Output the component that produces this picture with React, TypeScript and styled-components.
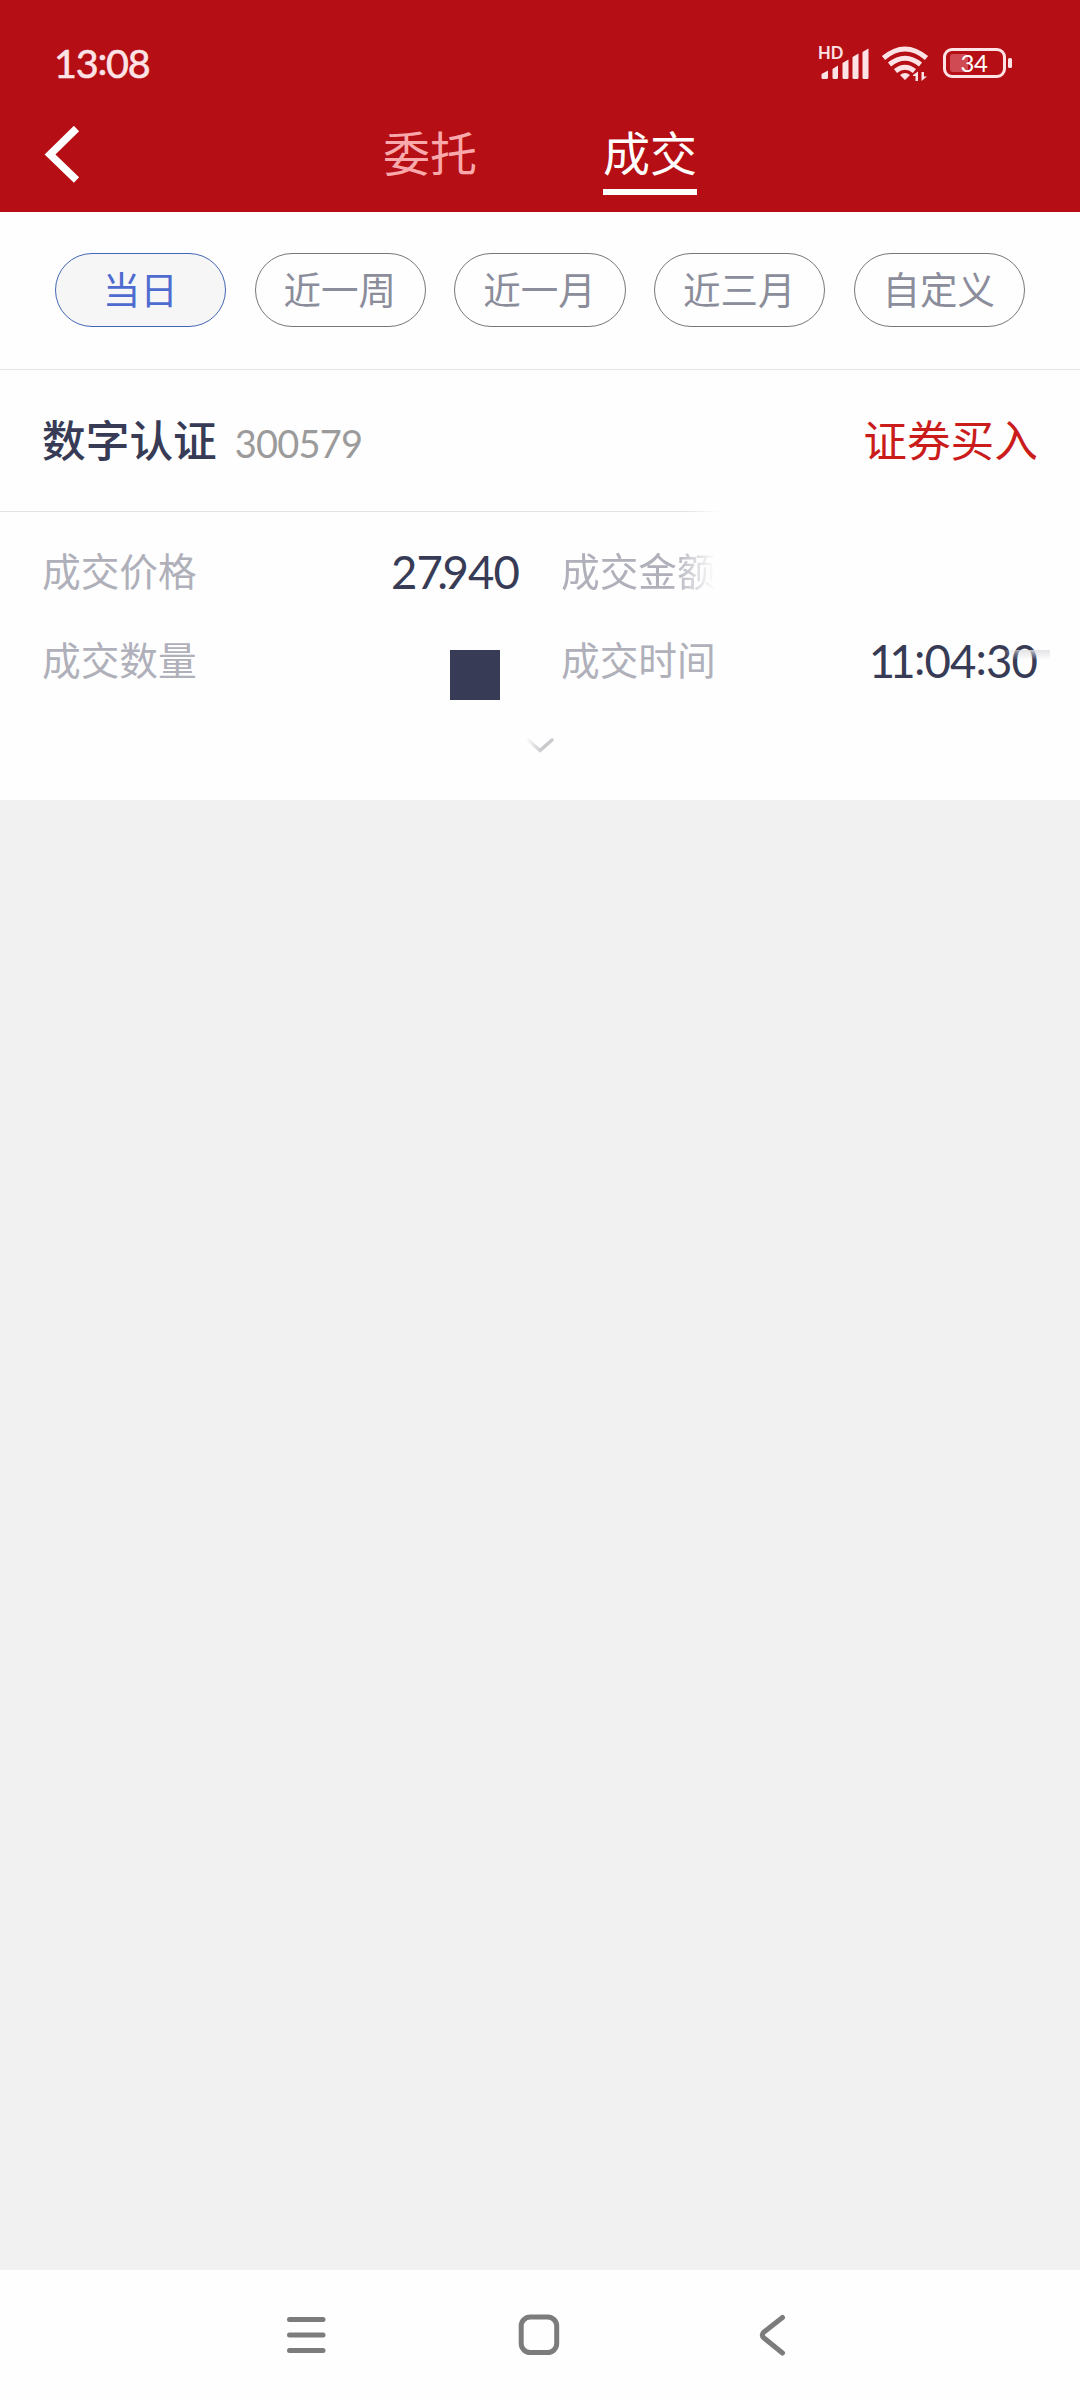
import React from "react";
import styled, { createGlobalStyle } from "styled-components";

const cjk = `"Noto Sans CJK SC", sans-serif`;
const num = `Lato, "Noto Sans CJK SC", sans-serif`;

const GlobalStyle = createGlobalStyle`
  * { box-sizing: border-box; }
  body { margin: 0; background: #f1f1f1; font-family: ${cjk}; }
`;

const Screen = styled.div`
  width: 1080px;
  height: 2400px;
  display: flex;
  flex-direction: column;
  background: #f1f1f1;
  overflow: hidden;
`;

const Header = styled.header`
  height: 212px;
  background: #b50f15;
  display: flex;
  flex-direction: column;
`;

const StatusBar = styled.div`
  height: 126px;
  padding: 0 68px 0 54px;
  display: flex;
  align-items: center;
  justify-content: space-between;
`;

const Clock = styled.span`
  font: 400 39.5px/48px ${num};
  letter-spacing: -1.2px;
  color: #fde3e6;
  -webkit-text-stroke: 0.6px #fde3e6;
`;

const Colon = styled.span`
  line-height: 1;
  vertical-align: 3px;
`;

const StatusIcons = styled.svg`
  display: block;
  width: 200px;
  height: 44px;
`;

const HdLabel = styled.text`
  font: 700 16.5px Lato, sans-serif;
  fill: #fde3e6;
`;

const BatteryLabel = styled.text`
  font: 400 24px Lato, sans-serif;
  letter-spacing: -0.3px;
  fill: #fff;
`;

const TitleBar = styled.div`
  height: 86px;
  padding: 0 44px;
  display: grid;
  grid-template-columns: 339px auto 1fr;
`;

const BackButton = styled.button`
  padding: 0;
  border: 0;
  background: none;
  display: flex;
  align-items: flex-start;
`;

const Tabs = styled.nav`
  display: flex;
  gap: 126px;
`;

const Tab = styled.span<{ $active?: boolean }>`
  width: 94px;
  height: 69px;
  font-size: 47px;
  line-height: 49px;
  color: ${(p) => (p.$active ? "#fff" : "#f9a9ac")};
  border-bottom: 6px solid ${(p) => (p.$active ? "#fff" : "transparent")};
`;

const Filters = styled.div`
  height: 158px;
  padding: 41px 55px 0 55px;
  display: grid;
  grid-template-columns: repeat(5, 1fr);
  gap: 28.4px;
  align-items: start;
  background: #fefefe;
  border-bottom: 1px solid #e4e4e4;
`;

const Pill = styled.button<{ $active?: boolean }>`
  height: 74px;
  padding: 0 1px 4px 0;
  border-radius: 37px;
  border: 1px solid ${(p) => (p.$active ? "#4467b4" : "#74777c")};
  background: ${(p) => (p.$active ? "#f6f6f6" : "#fefefe")};
  color: ${(p) => (p.$active ? "#4e6bd0" : "#8b8d9b")};
  font: 400 37.5px/68px ${cjk};
`;

const Card = styled.section`
  height: 430px;
  background: #fefefe;
  display: flex;
  flex-direction: column;
`;

const CardHead = styled.div`
  height: 141px;
  padding: 0 42px;
  display: flex;
  align-items: center;
  justify-content: space-between;
`;

const Stock = styled.div`
  display: flex;
  align-items: center;
  gap: 18px;
`;

const StockName = styled.span`
  padding-bottom: 5px;
  font-size: 43.7px;
  font-weight: 500;
  line-height: 64px;
  color: #373b56;
`;

const StockCode = styled.span`
  padding-top: 5px;
  font: 400 38px/64px ${num};
  letter-spacing: -0.8px;
  color: #9b9b9b;
`;

const Side = styled.span`
  padding-bottom: 5px;
  font-size: 43.7px;
  line-height: 64px;
  color: #cb1c1c;
`;

const Rule = styled.div`
  height: 1px;
  background: linear-gradient(90deg, #e2e2e2 0 685px, #fefefe 720px);
`;

const Details = styled.div`
  height: 194px;
  padding: 15px 43px 0 42px;
  display: grid;
  grid-template-columns: 477px 476px;
  column-gap: 42px;
  grid-auto-rows: 89.5px;
`;

const Field = styled.div`
  display: flex;
  align-items: center;
  justify-content: space-between;
`;

const Label = styled.span<{ $faded?: boolean }>`
  padding-bottom: 6px;
  font-size: 38.7px;
  line-height: 56px;
  color: #afb0ba;
  ${(p) => p.$faded && "mask-image: linear-gradient(90deg, #000 0 112px, transparent 154px);"}
`;

const Value = styled.span`
  font: 400 45.5px/56px ${num};
  letter-spacing: -0.9px;
  color: #373b56;
`;

const Kern = styled.span<{ $by: number }>`
  letter-spacing: ${(p) => p.$by}px;
`;

const TimeWrap = styled.span`
  position: relative;
  display: flex;
`;

const Smudge = styled.i`
  position: absolute;
  right: -13px;
  top: 17px;
  width: 48px;
  height: 10px;
  background: linear-gradient(180deg, rgba(222, 222, 226, 0.85), rgba(254, 254, 254, 0));
  mask-image: linear-gradient(90deg, transparent, #000 20px);
`;

const Block = styled.span`
  width: 50px;
  height: 50px;
  margin: 28px 19px 0 0;
  background: #373b56;
`;

const Expand = styled.div`
  display: flex;
  justify-content: center;
  padding-top: 31px;
`;

const Spacer = styled.main`
  flex: 1;
`;

const NavBar = styled.footer`
  height: 130px;
  background: #fefefe;
  display: flex;
  justify-content: center;
  align-items: center;
`;

const NavIcons = styled.svg`
  display: block;
`;

const periods = ["当日", "近一周", "近一月", "近三月", "自定义"];

export default function App() {
  return (
    <Screen>
      <GlobalStyle />
      <Header>
        <StatusBar>
          <Clock>13<Colon>:</Colon>08</Clock>
          <StatusIcons viewBox="812 41 200 44" fill="#fde3e6">
            <HdLabel x="818" y="59">HD</HdLabel>
            <path d="M821.500 74L828 70.500V77.500Q828 79 826.500 79H823Q821.500 79 821.500 77.500ZM832.500 69L838 65.500V77.500Q838 79 836.500 79H834Q832.500 79 832.500 77.500ZM842.500 63L848.500 59.500V77.500Q848.500 79 847 79H844Q842.500 79 842.500 77.500ZM852.500 57L858.500 53.500V77.500Q858.500 79 857 79H854Q852.500 79 852.500 77.500ZM862.500 52L868.500 48.500V77.500Q868.500 79 867 79H864Q862.500 79 862.500 77.500Z" />
            <g fill="none" stroke="#fde3e6" strokeWidth="5">
              <path d="M883.500 58Q905 40 926.500 58" />
              <path d="M889.500 64.500Q905 52 920.500 64.500" />
              <path d="M895.500 71Q905 63.500 914.500 71" />
            </g>
            <path d="M900 75Q905 71 910 75L905 80ZM913 75L918 71.500V81H915.500V76H913ZM921.500 72H924V76.500H927L921.500 81Z" />
            <rect x="944.500" y="49.500" width="60" height="27" rx="7.500" fill="none" stroke="#fde3e6" strokeWidth="3" />
            <rect x="950" y="54" width="18" height="18" rx="3" fill="#cf4a52" />
            <rect x="1008" y="58" width="4" height="10" rx="1.500" />
            <BatteryLabel x="960.500" y="72">34</BatteryLabel>
          </StatusIcons>
        </StatusBar>
        <TitleBar>
          <BackButton>
            <svg width="36" height="62" viewBox="0 0 36 62" fill="none" stroke="#fff" strokeWidth="7.500">
              <path d="M32.500 2.500L6 28.500L32.500 54" />
            </svg>
          </BackButton>
          <Tabs>
            <Tab>委托</Tab>
            <Tab $active>成交</Tab>
          </Tabs>
        </TitleBar>
      </Header>
      <Filters>
        {periods.map((p, i) => (
          <Pill key={p} $active={i === 0}>{p}</Pill>
        ))}
      </Filters>
      <Card>
        <CardHead>
          <Stock>
            <StockName>数字认证</StockName>
            <StockCode>300579</StockCode>
          </Stock>
          <Side>证券买入</Side>
        </CardHead>
        <Rule />
        <Details>
          <Field>
            <Label>成交价格</Label>
            <Value>2<Kern $by={-5.5}>7.</Kern>940</Value>
          </Field>
          <Field>
            <Label $faded>成交金额</Label>
          </Field>
          <Field>
            <Label>成交数量</Label>
            <Block />
          </Field>
          <Field>
            <Label>成交时间</Label>
            <TimeWrap>
              <Value>
                <Kern $by={-6}>1</Kern>
                <Kern $by={-1.5}>1</Kern>
                <Colon>:</Colon>04<Colon>:</Colon>30
              </Value>
              <Smudge />
            </TimeWrap>
          </Field>
        </Details>
        <Expand>
          <svg width="30" height="18" viewBox="525 736 30 18" fill="none">
            <defs>
              <linearGradient id="fade" gradientUnits="userSpaceOnUse" x1="526" y1="0" x2="542" y2="0">
                <stop stopColor="#c8c9cc" stopOpacity="0" />
                <stop offset="1" stopColor="#c8c9cc" />
              </linearGradient>
            </defs>
            <path d="M528 739L540 749.500L552 739" stroke="url(#fade)" strokeWidth="3.500" strokeLinecap="round" />
          </svg>
        </Expand>
      </Card>
      <Spacer />
      <NavBar>
        <NavIcons width="1080" height="130" viewBox="0 2270 1080 130" fill="none" stroke="#7c7c7c" strokeWidth="5" strokeLinecap="round" strokeLinejoin="round">
          <path d="M289.500 2319.500H323M289.500 2335H323M289.500 2350.500H323" />
          <rect x="521.200" y="2317" width="35.500" height="35.500" rx="9" />
          <path d="M782.500 2317.500L764 2332Q760.500 2335 764 2338L782.500 2353" />
        </NavIcons>
      </NavBar>
    </Screen>
  );
}
